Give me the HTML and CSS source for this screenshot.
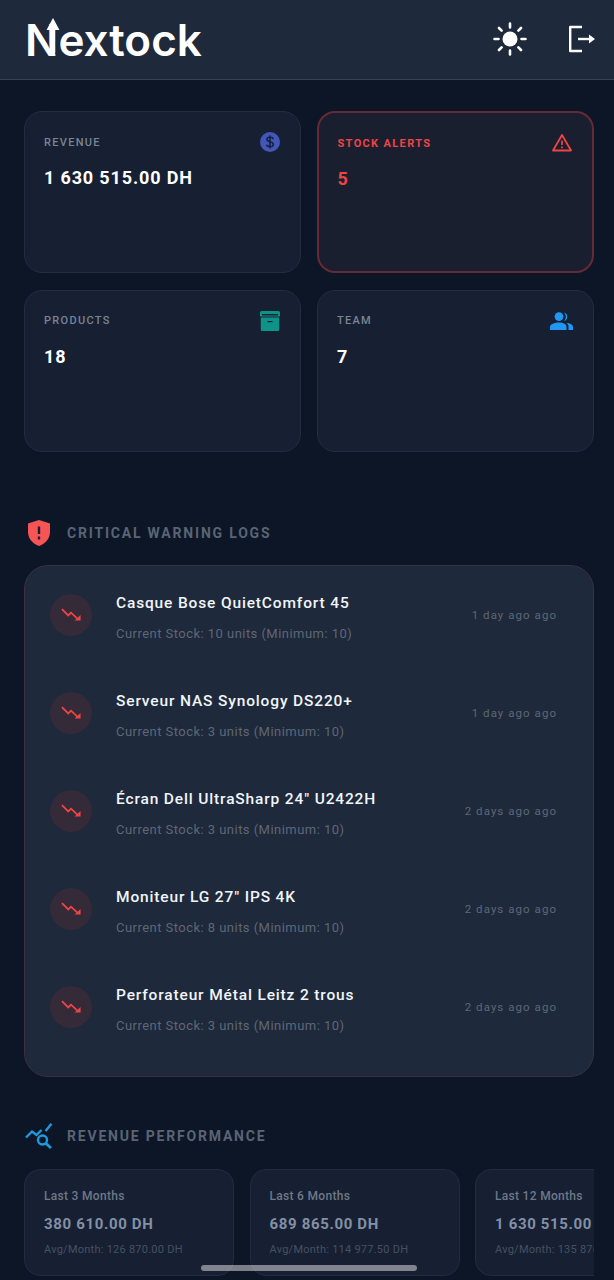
FILE: index.html
```html
<!DOCTYPE html>
<html lang="en">
<head>
    <meta charset="UTF-8">
    <meta name="viewport" content="width=device-width, initial-scale=1.0">
    <title>Dashboard - Nextock</title>
    <link rel="stylesheet" href="styles.css">
</head>
<body>
    <header class="topbar">
        <div class="logo">
            <span class="logo-text">Nextock</span>
            <svg class="logo-arrow" viewBox="0 0 14 36"><path d="M9.800 12V36" stroke="#1e293b" stroke-width="1.200"/><path d="M7 0L13.500 12H9.200V35L4.500 27V12H.5Z" fill="#fff"/></svg>
        </div>
        <div class="topbar-actions">
            <svg class="icon-sun" viewBox="0 0 34 34" fill="none" stroke="#fff" stroke-width="2.6" stroke-linecap="round">
                <circle cx="17" cy="17" r="7.5" fill="#fff" stroke="none"/>
                <path d="M17 1.5v4M17 28.5v4M1.5 17h4M28.5 17h4M6 6l2.6 2.6M25.4 25.4L28 28M6 28l2.6-2.6M25.4 8.600L28 6"/>
            </svg>
            <svg class="icon-logout" viewBox="0 0 28 28" fill="none" stroke="#fff" stroke-width="2.400">
                <path d="M14 2H2.200V26H14" stroke-linejoin="round"/>
                <path d="M10 14H24"/>
                <path d="M21 9.500L27 14L21 18.500Z" fill="#fff" stroke="none"/>
            </svg>
        </div>
    </header>

    <main class="content">
        <section class="stats">
            <div class="stat-card">
                <div class="stat-top">
                    <span class="stat-label">REVENUE</span>
                    <svg class="stat-icon" viewBox="0 0 20 20"><circle cx="10" cy="10" r="10" fill="#4257b8"/><path d="M13.300 7.200C13 5.900 11.700 5.300 10 5.300C8.200 5.300 6.900 6.100 6.900 7.500C6.900 10.600 13.300 9 13.300 12.400C13.300 13.900 11.900 14.700 10 14.700C8.200 14.700 6.900 14 6.600 12.700M10 3.500V16.500" fill="none" stroke="#15203a" stroke-width="1.500"/></svg>
                </div>
                <div class="stat-value">1 630 515.00 DH</div>
            </div>
            <div class="stat-card stat-alert">
                <div class="stat-top">
                    <span class="stat-label">STOCK ALERTS</span>
                    <svg class="stat-icon" viewBox="0 0 20 20"><path d="M10 2L19 17.500H1Z" fill="none" stroke="#ef4444" stroke-width="1.800" stroke-linejoin="round"/><path d="M10 7.500V12M10 13.500V15.200" stroke="#ef4444" stroke-width="1.700"/></svg>
                </div>
                <div class="stat-value">5</div>
            </div>
            <div class="stat-card">
                <div class="stat-top">
                    <span class="stat-label">PRODUCTS</span>
                    <svg class="stat-icon" viewBox="0 0 20 20"><path d="M1.500 0H18.500A1.500 1.500 0 0 1 20 1.500V5.500H0V1.500A1.500 1.500 0 0 1 1.500 0ZM2 3V4.500H18V3Z" fill="#0d9488" fill-rule="evenodd"/><path d="M.8 6.500H19.200V18.500A1.500 1.500 0 0 1 17.700 20H2.300A1.500 1.500 0 0 1 .8 18.500ZM7.500 10V11.200H12.500V10Z" fill="#0d9488" fill-rule="evenodd"/></svg>
                </div>
                <div class="stat-value">18</div>
            </div>
            <div class="stat-card">
                <div class="stat-top">
                    <span class="stat-label">TEAM</span>
                    <svg class="stat-icon stat-icon-team" viewBox="0 0 23 18" fill="#2196f3"><circle cx="9" cy="4.600" r="4.400"/><path d="M0 18V15C0 12 4.500 10.500 9 10.500C13.500 10.500 16.500 12 16.500 15V18Z"/><path d="M14 .4A4.600 4.600 0 0 1 14 9.200A7 7 0 0 0 14 .4Z"/><path d="M16.500 10.800C20 11.300 23 12.700 23 15V18H18.500V15C18.500 13.300 18 11.900 16.500 10.800Z"/></svg>
                </div>
                <div class="stat-value">7</div>
            </div>
        </section>

        <section class="logs-section">
            <h2 class="section-title">
                <svg class="section-icon" viewBox="0 0 22 26"><path d="M11 0L22 3.500V12C22 18.500 17.500 23.500 11 26C4.500 23.500 0 18.500 0 12V3.500Z" fill="#f75555"/><path d="M11 6.500V14M11 16.500V19.500" stroke="#1a1f33" stroke-width="2.400"/></svg>
                CRITICAL WARNING LOGS
            </h2>
            <div class="logs-panel">
                <div class="log-row">
                    <div class="log-badge"><svg viewBox="0 0 22 14" fill="none" stroke="#ef4444" stroke-width="2"><path d="M1 1L8 8L11 5L18 11.500"/><path d="M21.500 13.500H15L21.500 7.500Z" fill="#ef4444" stroke="none"/></svg></div>
                    <div class="log-text">
                        <div class="log-name">Casque Bose QuietComfort 45</div>
                        <div class="log-stock">Current Stock: 10 units (Minimum: 10)</div>
                    </div>
                    <div class="log-time">1 day ago ago</div>
                </div>
                <div class="log-row">
                    <div class="log-badge"><svg viewBox="0 0 22 14" fill="none" stroke="#ef4444" stroke-width="2"><path d="M1 1L8 8L11 5L18 11.500"/><path d="M21.500 13.500H15L21.500 7.500Z" fill="#ef4444" stroke="none"/></svg></div>
                    <div class="log-text">
                        <div class="log-name">Serveur NAS Synology DS220+</div>
                        <div class="log-stock">Current Stock: 3 units (Minimum: 10)</div>
                    </div>
                    <div class="log-time">1 day ago ago</div>
                </div>
                <div class="log-row">
                    <div class="log-badge"><svg viewBox="0 0 22 14" fill="none" stroke="#ef4444" stroke-width="2"><path d="M1 1L8 8L11 5L18 11.500"/><path d="M21.500 13.500H15L21.500 7.500Z" fill="#ef4444" stroke="none"/></svg></div>
                    <div class="log-text">
                        <div class="log-name">Écran Dell UltraSharp 24" U2422H</div>
                        <div class="log-stock">Current Stock: 3 units (Minimum: 10)</div>
                    </div>
                    <div class="log-time">2 days ago ago</div>
                </div>
                <div class="log-row">
                    <div class="log-badge"><svg viewBox="0 0 22 14" fill="none" stroke="#ef4444" stroke-width="2"><path d="M1 1L8 8L11 5L18 11.500"/><path d="M21.500 13.500H15L21.500 7.500Z" fill="#ef4444" stroke="none"/></svg></div>
                    <div class="log-text">
                        <div class="log-name">Moniteur LG 27" IPS 4K</div>
                        <div class="log-stock">Current Stock: 8 units (Minimum: 10)</div>
                    </div>
                    <div class="log-time">2 days ago ago</div>
                </div>
                <div class="log-row">
                    <div class="log-badge"><svg viewBox="0 0 22 14" fill="none" stroke="#ef4444" stroke-width="2"><path d="M1 1L8 8L11 5L18 11.500"/><path d="M21.500 13.500H15L21.500 7.500Z" fill="#ef4444" stroke="none"/></svg></div>
                    <div class="log-text">
                        <div class="log-name">Perforateur Métal Leitz 2 trous</div>
                        <div class="log-stock">Current Stock: 3 units (Minimum: 10)</div>
                    </div>
                    <div class="log-time">2 days ago ago</div>
                </div>
            </div>
        </section>

        <section class="revenue-section">
            <h2 class="section-title">
                <svg class="section-icon section-icon-rev" viewBox="0 0 28 26" fill="none" stroke="#1d9be0" stroke-width="2.400"><path d="M1 14.500L7 8.500L11.500 12L16.500 7M20.500 8L26.500 0.800"/><circle cx="17.500" cy="17" r="4.500"/><path d="M21 20.500L26 25" stroke-width="2.800"/></svg>
                REVENUE PERFORMANCE
            </h2>
            <div class="revenue-scroll">
                <div class="revenue-card">
                    <div class="revenue-period">Last 3 Months</div>
                    <div class="revenue-value">380 610.00 DH</div>
                    <div class="revenue-avg">Avg/Month: 126 870.00 DH</div>
                </div>
                <div class="revenue-card">
                    <div class="revenue-period">Last 6 Months</div>
                    <div class="revenue-value">689 865.00 DH</div>
                    <div class="revenue-avg">Avg/Month: 114 977.50 DH</div>
                </div>
                <div class="revenue-card">
                    <div class="revenue-period">Last 12 Months</div>
                    <div class="revenue-value">1 630 515.00 DH</div>
                    <div class="revenue-avg">Avg/Month: 135 876.25 DH</div>
                </div>
            </div>
        </section>
    </main>

    <div class="home-indicator"></div>
</body>
</html>
```

FILE: styles.css
```css
html, body {
    margin: 0;
    padding: 0;
    height: 1280px;
    overflow: hidden;
}

body {
    background-color: #0d1627;
    color: white;
    font-family: Roboto, "Liberation Sans", sans-serif;
}

.topbar {
    height: 80px;
    box-sizing: border-box;
    background-color: #1e293b;
    border-bottom: 1px solid #334155;
    display: flex;
    justify-content: space-between;
    align-items: center;
    padding: 0 18px 0 25px;
}

.logo {
    position: relative;
    display: flex;
    margin-top: 1px;
}

.logo-text {
    font-family: Inter, sans-serif;
    font-size: 44px;
    font-weight: 600;
    line-height: 44px;
    letter-spacing: 0;
}

.logo-arrow {
    position: absolute;
    left: 21px;
    top: 0;
    width: 14px;
    height: 36px;
}

.topbar-actions {
    display: flex;
    align-items: center;
    gap: 41px;
    margin-bottom: 2px;
}

.icon-sun {
    width: 34px;
    height: 34px;
}

.icon-logout {
    width: 28px;
    height: 28px;
}

.content {
    padding: 31px 20px 0 24px;
}

.stats {
    display: grid;
    grid-template-columns: 277px 277px;
    gap: 16.500px 16px;
}

.stat-card {
    height: 162px;
    box-sizing: border-box;
    background-color: #162032;
    border: 1.500px solid #222d41;
    border-radius: 18px;
    padding: 19px 20px 0 19px;
}

.stat-alert {
    background-color: #1a1f30;
    border: 2px solid #642b37;
    padding-left: 18.500px;
}

.stat-top {
    display: flex;
    justify-content: space-between;
    align-items: center;
    height: 22px;
}

.stat-label {
    font-size: 11px;
    font-weight: 500;
    letter-spacing: 1.300px;
    color: #7a8494;
}

.stat-alert .stat-label {
    color: #ef4444;
    font-weight: 700;
    letter-spacing: 1.350px;
}

.stat-icon {
    width: 20px;
    height: 20px;
}

.stat-icon-team {
    width: 23px;
    height: 18px;
}

.stat-value {
    font-size: 18px;
    font-weight: 700;
    line-height: 22px;
    letter-spacing: 0.850px;
    margin-top: 14px;
}

.stat-alert .stat-value {
    color: #ef4444;
}

.logs-section {
    margin-top: 67.500px;
}

.section-title {
    display: flex;
    align-items: center;
    gap: 17px;
    height: 28px;
    margin: 0;
    font-size: 14px;
    font-weight: 700;
    letter-spacing: 1.800px;
    color: #5a6474;
}

.section-icon {
    width: 22px;
    height: 26px;
    margin-left: 4px;
}

.section-icon-rev {
    width: 28px;
    margin-left: 1px;
    margin-right: -3px;
}

.logs-panel {
    margin-top: 18px;
    width: 570px;
    height: 512px;
    box-sizing: border-box;
    background-color: #1e293b;
    border: 1.500px solid #3b2f42;
    border-radius: 24px;
    padding: 0 36px 0 25px;
}

.log-row {
    height: 98px;
    box-sizing: border-box;
    display: flex;
    align-items: center;
}

.log-badge {
    width: 42px;
    height: 42px;
    border-radius: 50%;
    background-color: #352a38;
    display: flex;
    align-items: center;
    justify-content: center;
    flex-shrink: 0;
    margin-right: 24px;
    margin-bottom: 1px;
}

.log-badge svg {
    width: 20px;
    height: 13px;
}

.log-text {
    flex: 1;
    padding-top: 6px;
}

.log-name {
    font-size: 15.500px;
    font-weight: 500;
    line-height: 20px;
    letter-spacing: 0.850px;
    color: #f1f5f9;
}

.log-stock {
    font-size: 13px;
    line-height: 18px;
    letter-spacing: 0.460px;
    color: #5f6776;
    margin-top: 12px;
}

.log-time {
    font-size: 11.500px;
    letter-spacing: 1.050px;
    color: #5f6776;
    margin-bottom: 0;
}

.revenue-section {
    margin-top: 45px;
}

.revenue-scroll {
    display: flex;
    gap: 15.500px;
    width: 570px;
    margin-top: 19px;
    overflow: hidden;
}

.revenue-card {
    flex: 0 0 210px;
    height: 107px;
    box-sizing: border-box;
    background-color: #162032;
    border: 1.500px solid #212c40;
    border-radius: 16px;
    padding: 18px 19px 0;
}

.revenue-period {
    font-size: 12px;
    font-weight: 500;
    line-height: 16px;
    letter-spacing: 0.300px;
    color: #6e7889;
}

.revenue-value {
    font-size: 15px;
    font-weight: 700;
    line-height: 20px;
    letter-spacing: 0.650px;
    margin-top: 10px;
    color: #8390a5;
    white-space: nowrap;
}

.revenue-avg {
    font-size: 11px;
    line-height: 14px;
    letter-spacing: 0.250px;
    margin-top: 9px;
    color: #465062;
    white-space: nowrap;
}

.home-indicator {
    position: absolute;
    left: 201px;
    top: 1265px;
    width: 216px;
    height: 6px;
    border-radius: 3px;
    background-color: rgba(255, 255, 255, 0.45);
}
```
